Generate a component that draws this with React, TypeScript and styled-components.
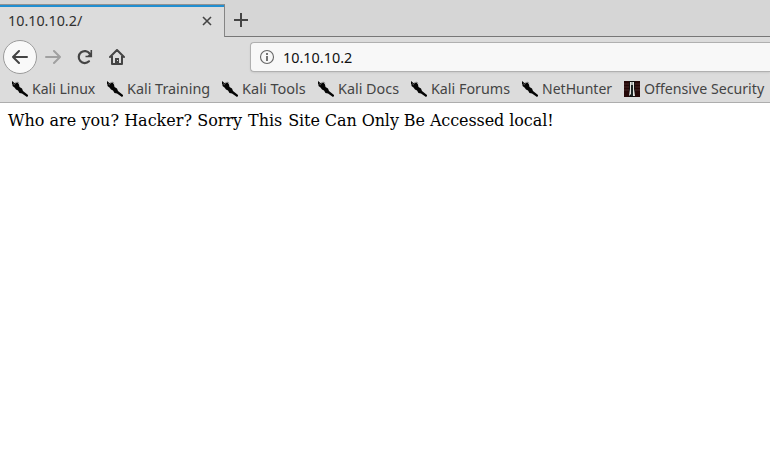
import React from 'react';
import styled, { createGlobalStyle } from 'styled-components';

const GlobalStyle = createGlobalStyle`
  * { box-sizing: border-box; }
  html, body { margin: 0; background: #fff; overflow: hidden; }
`;

const Browser = styled.div`
  width: 770px;
  height: 463px;
  display: flex;
  flex-direction: column;
  overflow: hidden;
  background: #fff;
  font-family: "Noto Sans", "Open Sans", sans-serif;
`;

const TabStrip = styled.div`
  height: 37px;
  flex: none;
  display: flex;
  align-items: stretch;
  background: #d6d6d6;
`;

const Tab = styled.div`
  width: 225px;
  margin-top: 4px;
  padding: 0 12px 0 8px;
  display: flex;
  align-items: center;
  justify-content: space-between;
  background: #dcdcdc;
  border-top: 1px solid #929292;
  border-right: 1px solid #858585;
  box-shadow: inset 0 2px 0 #218fd1;
`;

const Label = styled.span<{ $width: number; $stretch: number; $color: string; $lift?: number }>`
  display: block;
  flex: none;
  width: ${(p) => p.$width}px;
  padding-bottom: ${(p) => p.$lift ?? 0}px;
  font-size: 15px;
  line-height: 20px;
  white-space: nowrap;
  transform: scaleX(${(p) => p.$stretch});
  transform-origin: left center;
  color: ${(p) => p.$color};
`;

const NewTabArea = styled.div`
  flex: 1;
  padding: 12px 0 0 8px;
  border-bottom: 1px solid #777;
`;

const Icon = styled.svg`
  display: block;
  flex: none;
`;

const Toolbar = styled.div`
  height: 39px;
  flex: none;
  display: flex;
  align-items: center;
  padding: 1px 0 0 3px;
  background: #dcdcdc;
`;

const BackButton = styled.div`
  width: 34px;
  height: 34px;
  display: grid;
  place-items: center;
  border: 1px solid #9b9b9b;
  border-radius: 50%;
  background: #f9f9f9;
`;

const ToolButton = styled.div`
  width: 32px;
  height: 32px;
  display: grid;
  place-items: center;
`;

const AddressBar = styled.div`
  flex: 1;
  height: 30px;
  margin-left: 117px;
  padding-left: 8px;
  display: flex;
  align-items: center;
  gap: 8px;
  background: #f8f8f8;
  border: 1px solid #b0b0b0;
  border-right: 0;
  border-radius: 4px 0 0 4px;
  box-shadow: 0 1px 2px rgba(0, 0, 0, 0.08);
`;

const BookmarkBar = styled.div`
  height: 27px;
  flex: none;
  display: flex;
  align-items: center;
  gap: 12px;
  padding-left: 12px;
  background: #dcdcdc;
  border-bottom: 1px solid #adadad;
`;

const Bookmark = styled.div`
  display: flex;
  align-items: center;
  gap: 4px;
  flex: none;
`;

const Page = styled.main`
  flex: 1;
  padding: 8px;
  font: 16px/19px "DejaVu Serif", serif;
  color: #000;
  white-space: nowrap;
`;

const Message = styled.p`
  margin: 0;
`;

const Phrase = styled.span<{ $word?: number; $letter?: number }>`
  word-spacing: ${(p) => p.$word ?? 0}px;
  letter-spacing: ${(p) => p.$letter ?? 0}px;
`;

const KaliIcon = () => (
  <Icon width="16" height="16" viewBox="0 0 16 16">
    <path
      d="M0 0l3 2.500L5.500 1.500 7 3.500 7.500 6l2.500 1.500 1 2.500 5 4V15l-1 1-5-3.500-2.500-.500L6 9.500 4 8.500 2.500 6.500 .500 5V3.500L0 3z"
      fill="#050505"
    />
    <path d="M3 2l2.500-1 1 1M5.500 1L7 2.500M1 2.500L3 4" stroke="#777" strokeWidth="0.7" fill="none" />
  </Icon>
);

const OffsecIcon = () => (
  <Icon width="16" height="16" viewBox="0 0 16 16">
    <path d="M0 0h16v16H0z" fill="#250808" />
    <path d="M0 3h5M0 6h5M0 9h5M11 3h5M11 6h5M11 9h5" stroke="#452829" />
    <path d="M5 0h6v16H5z" fill="#121010" />
    <path d="M6 1h4v7l1 7H9V4H7v9l-2 2 1-7z" fill="#e4e4e0" />
    <path d="M7 4h2v11H7z" fill="#1c2525" />
    <path d="M7 1h2v3H7z" fill="#a8b0ae" />
  </Icon>
);

const bookmarks = [
  { name: 'Kali Linux', width: 63, stretch: 0.937 },
  { name: 'Kali Training', width: 83, stretch: 0.958 },
  { name: 'Kali Tools', width: 64, stretch: 0.968 },
  { name: 'Kali Docs', width: 61, stretch: 0.958 },
  { name: 'Kali Forums', width: 79, stretch: 0.953 },
  { name: 'NetHunter', width: 70, stretch: 0.935 },
  { name: 'Offensive Security', width: 122, stretch: 0.945 },
];

export default function App() {
  return (
    <Browser>
      <GlobalStyle />
      <TabStrip>
        <Tab>
          <Label $width={76} $stretch={0.955} $color="#303030" $lift={2}>10.10.10.2/</Label>
          <Icon width="10" height="10" viewBox="0 0 10 10">
            <path d="M1 1l8 8M9 1L1 9" stroke="#444" strokeWidth="1.6" />
          </Icon>
        </Tab>
        <NewTabArea>
          <Icon width="16" height="16" viewBox="0 0 16 16">
            <path d="M8 1v14M1 8h14" stroke="#444" strokeWidth="2" />
          </Icon>
        </NewTabArea>
      </TabStrip>
      <Toolbar>
        <BackButton>
          <Icon width="16" height="16" viewBox="0 0 16 16">
            <path d="M15 8H1M7 2L1 8l6 6" fill="none" stroke="#444" strokeWidth="2" strokeLinecap="round" strokeLinejoin="round" />
          </Icon>
        </BackButton>
        <ToolButton>
          <Icon width="16" height="16" viewBox="0 0 16 16">
            <path d="M1 8h14M9 2l6 6-6 6" fill="none" stroke="#a0a0a0" strokeWidth="2" strokeLinecap="round" strokeLinejoin="round" />
          </Icon>
        </ToolButton>
        <ToolButton>
          <Icon width="16" height="16" viewBox="0 0 16 16">
            <path d="M12 12.300A6 6 0 1 1 12.600 4.500" fill="none" stroke="#444" strokeWidth="2.200" strokeLinecap="round" />
            <path d="M14.300 1v6.500H8.500" fill="none" stroke="#444" strokeWidth="1.600" />
            <path d="M14.500 3v4.500H10z" fill="#444" />
          </Icon>
        </ToolButton>
        <ToolButton>
          <Icon width="16" height="16" viewBox="0 0 16 16">
            <path d="M1 8l7-7 7 7M3 7v8h10V7" fill="none" stroke="#444" strokeWidth="2" strokeLinecap="round" strokeLinejoin="round" />
            <path d="M6 9h4v6H6z" fill="#444" />
            <path d="M8 11h1v1H8z" fill="#dcdcdc" />
          </Icon>
        </ToolButton>
        <AddressBar>
          <Icon width="16" height="16" viewBox="0 0 16 16">
            <circle cx="8" cy="8" r="6.5" fill="none" stroke="#666" strokeWidth="1.1" />
            <path d="M8 7v5M8 4v2" stroke="#666" strokeWidth="1.8" />
          </Icon>
          <Label $width={70} $stretch={0.96} $color="#101010">10.10.10.2</Label>
        </AddressBar>
      </Toolbar>
      <BookmarkBar>
        {bookmarks.map((b) => (
          <Bookmark key={b.name}>
            {b.name === 'Offensive Security' ? <OffsecIcon /> : <KaliIcon />}
            <Label $width={b.width} $stretch={b.stretch} $color="#444" $lift={2}>{b.name}</Label>
          </Bookmark>
        ))}
      </BookmarkBar>
      <Page>
        <Message>
          <Phrase $word={0.1}>Who are you? Hacker? </Phrase>
          <Phrase $word={0.8}>Sorry This </Phrase>
          <Phrase $letter={-0.09}>Site Can Only Be Accessed local!</Phrase>
        </Message>
      </Page>
    </Browser>
  );
}
